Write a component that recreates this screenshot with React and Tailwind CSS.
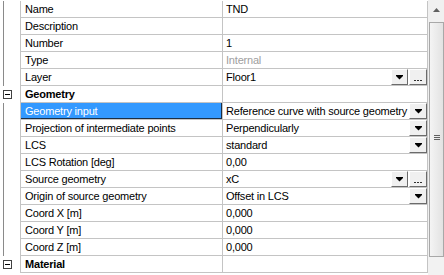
import React from "react";

const rows = [
  { name: "Name", value: "TND" },
  { name: "Description", value: "" },
  { name: "Number", value: "1" },
  { name: "Type", value: "Internal", gray: true },
  { name: "Layer", value: "Floor1", dd: true, more: true },
  { cat: "Geometry" },
  { name: "Geometry input", value: "Reference curve with source geometry", dd: true, selected: true },
  { name: "Projection of intermediate points", value: "Perpendicularly", dd: true },
  { name: "LCS", value: "standard", dd: true },
  { name: "LCS Rotation [deg]", value: "0,00" },
  { name: "Source geometry", value: "xC", dd: true, more: true },
  { name: "Origin of source geometry", value: "Offset in LCS", dd: true },
  { name: "Coord X [m]", value: "0,000" },
  { name: "Coord Y [m]", value: "0,000" },
  { name: "Coord Z [m]", value: "0,000" },
  { cat: "Material" },
];

function DropBtn() {
  return (
    <div className="w-[18px] h-[16px] bg-[#f0f0f0] border-t border-l border-t-white border-l-white border-b border-r border-b-[#6b6b6b] border-r-[#6b6b6b] flex items-center justify-center">
      <svg width="7" height="5" viewBox="0 0 7 5">
        <rect x="0" y="0" width="7" height="1" fill="#000" />
        <path d="M0 1h7L3.5 4.5z" fill="#000" />
      </svg>
    </div>
  );
}

function MoreBtn() {
  return (
    <div className="w-[18px] h-[16px] bg-[#f0f0f0] border-t border-l border-t-white border-l-white border-b border-r border-b-[#6b6b6b] border-r-[#6b6b6b] flex items-end justify-center pb-[3px] gap-[1px]">
      <div className="w-[2px] h-[1px] bg-[#303030]" />
      <div className="w-[2px] h-[1px] bg-[#303030]" />
      <div className="w-[2px] h-[1px] bg-[#303030]" />
    </div>
  );
}

function Row({ r }) {
  const isCat = !!r.cat;
  return (
    <div className="flex h-[17px]">
      <div className="relative w-[20px] shrink-0">
        {isCat ? (
          <div className="absolute left-[3px] top-[4px] w-[9px] h-[9px] border border-[#404040] bg-white flex items-center justify-center">
            <div className="w-[5px] h-[1px] bg-[#000]" />
          </div>
        ) : (
          <div className="absolute left-[3px] top-0 bottom-0 w-px bg-[#8a8a8a]" />
        )}
      </div>
      <div
        className={
          "w-[203px] shrink-0 border-l border-r border-b border-[#c4c4c4] pl-[4px] leading-[16px] whitespace-nowrap overflow-hidden " +
          (isCat ? "font-bold text-black" : r.selected ? "bg-[#3399ff] text-white shadow-[inset_-1px_-1px_0_#1b2f45]" : "text-black")
        }
      >
        {isCat ? r.cat : r.name}
      </div>
      <div className="flex-1 flex border-r border-b border-[#c4c4c4]">
        <div
          className={
            "flex-1 pl-[3px] leading-[16px] whitespace-nowrap overflow-hidden " +
            (r.gray ? "text-[#a0a0a0]" : "text-black")
          }
        >
          {isCat ? "" : r.value}
        </div>
        {r.dd && (
          <div className="flex gap-px">
            {r.more ? (
              <>
                <div className="w-[17px] h-[16px] bg-[#f0f0f0] border-t border-l border-t-white border-l-white border-b border-r border-b-[#6b6b6b] border-r-[#6b6b6b] flex items-center justify-center">
                  <svg width="7" height="5" viewBox="0 0 7 5">
                    <rect x="0" y="0" width="7" height="1" fill="#000" />
                    <path d="M0 1h7L3.5 4.5z" fill="#000" />
                  </svg>
                </div>
                <MoreBtn />
              </>
            ) : (
              <DropBtn />
            )}
          </div>
        )}
      </div>
    </div>
  );
}

export default function App() {
  return (
    <div className="w-[444px] h-[275px] bg-white flex overflow-hidden font-['Liberation_Sans',Arial,sans-serif] text-[11px] tracking-[-0.2px]">
      <div className="w-[428px] shrink-0 pt-px">
        {rows.map((r, i) => (
          <Row key={i} r={r} />
        ))}
      </div>
      <div className="w-[16px] shrink-0 bg-[#f0f0f0] flex flex-col">
        <div className="h-[22px] flex items-start justify-center pt-[8px]">
          <svg width="7" height="4" viewBox="0 0 7 4">
            <path d="M3.5 0L7 4H0z" fill="#606060" />
          </svg>
        </div>
        <div className="ml-px h-[235px] border border-[#a8a8a8] bg-[linear-gradient(to_right,#f4f4f4,#e2e2e2)] flex items-center justify-center">
          <div className="flex flex-col gap-[1px] mt-[-4px]">
            <div className="w-[6px] h-px bg-[#606060]" />
            <div className="w-[6px] h-px bg-[#606060]" />
            <div className="w-[6px] h-px bg-[#606060]" />
          </div>
        </div>
        <div className="flex-1 bg-[#f2f2f2]" />
      </div>
    </div>
  );
}
